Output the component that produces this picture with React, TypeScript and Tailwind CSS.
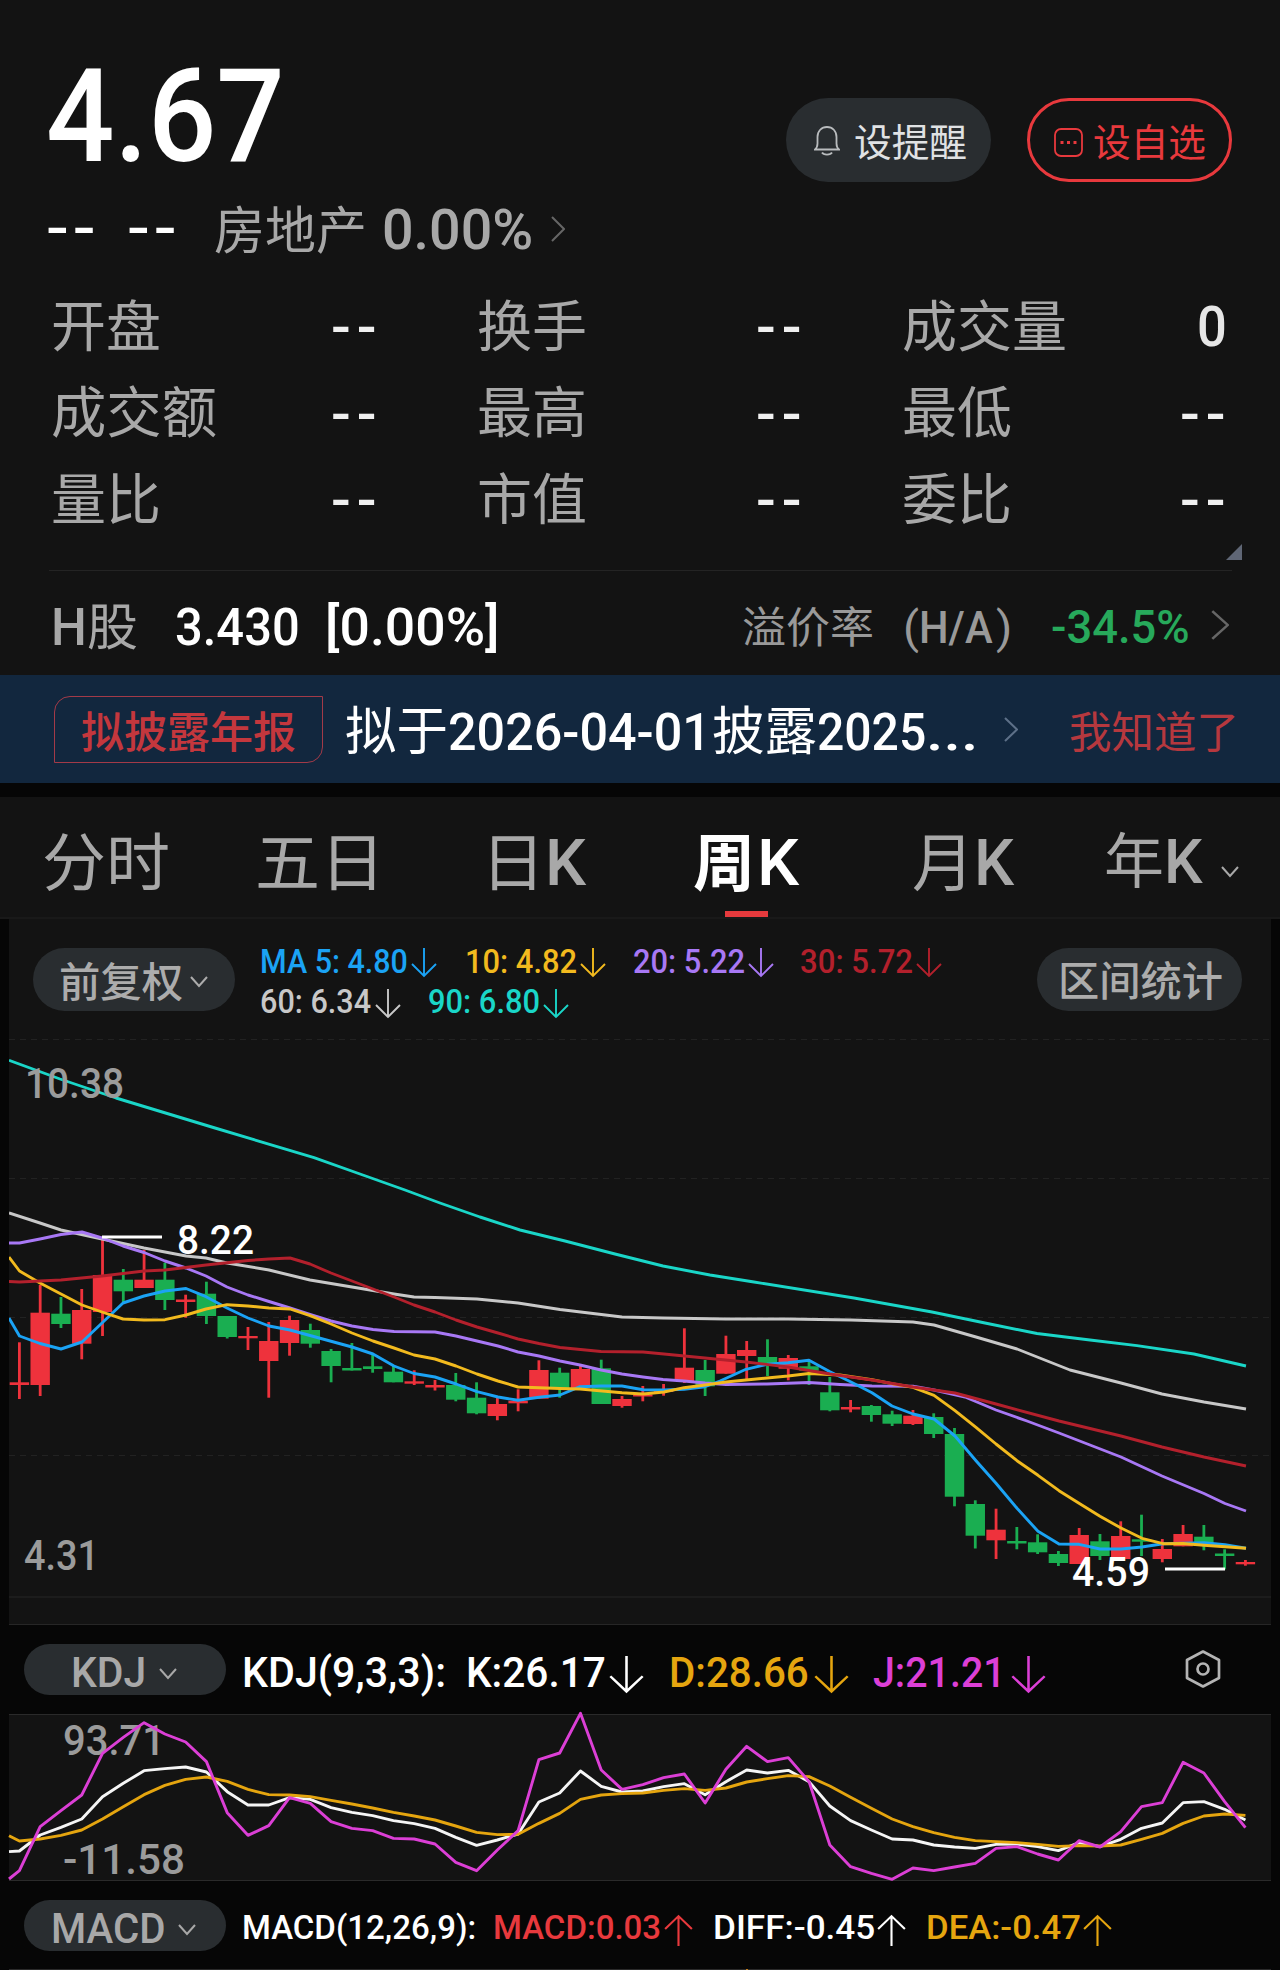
import React, { useLayoutEffect, useRef } from 'react';

// Stretches a run of text so that it fills the width given by its class
const Fit: React.FC<{ className: string; children: string }> = ({ className, children }) => {
  const ref = useRef<HTMLSpanElement>(null);

  useLayoutEffect(() => {
    const el = ref.current;
    if (!el || !el.parentElement) return;
    el.style.transform = `scaleX(${el.parentElement.clientWidth / el.offsetWidth})`;
  }, [children]);

  return (
    <span className={`inline-block shrink-0 whitespace-pre leading-none ${className}`}>
      <span ref={ref} className="inline-block origin-left">{children}</span>
    </span>
  );
};

const ChevronRight: React.FC<{ className: string }> = ({ className }) => (
  <svg className={className} viewBox="0 0 14 26" fill="none" stroke="currentColor" strokeWidth="2" preserveAspectRatio="none">
    <path d="M1 1l12 12L1 25" />
  </svg>
);

const ChevronDown: React.FC<{ className: string }> = ({ className }) => (
  <svg className={className} viewBox="0 0 18 12" fill="none" stroke="currentColor" strokeWidth="2">
    <path d="M1 1l8 9 8-9" />
  </svg>
);

const Arrow: React.FC<{ up?: boolean; className: string }> = ({ up, className }) => (
  <svg className={`shrink-0 ${className}`} viewBox="0 0 26 30" fill="none" stroke="currentColor" strokeWidth="1.9" preserveAspectRatio="none">
    {up ? <path d="M13 30V2M1 14L13 2l12 12" /> : <path d="M13 0v28M1 16l12 12 12-12" />}
  </svg>
);

interface Stat {
  label: string;
  width: string;
  value: string;
}

const stats: Stat[] = [
  { label: '开盘', width: 'w-[110px]', value: '--' },
  { label: '换手', width: 'w-[110px]', value: '--' },
  { label: '成交量', width: 'w-[165px]', value: '0' },
  { label: '成交额', width: 'w-[166px]', value: '--' },
  { label: '最高', width: 'w-[110px]', value: '--' },
  { label: '最低', width: 'w-[110px]', value: '--' },
  { label: '量比', width: 'w-[110px]', value: '--' },
  { label: '市值', width: 'w-[110px]', value: '--' },
  { label: '委比', width: 'w-[110px]', value: '--' },
];

// [rising, high, body top, body bottom, low]
const candles: [number, number, number, number, number][] = [
  [1, 1342.3, 1382.3, 1385, 1399], [1, 1285, 1312.7, 1385, 1396], [0, 1297, 1313.7, 1324, 1328],
  [1, 1289, 1310, 1343.7, 1359.3], [1, 1237, 1275, 1312, 1336], [0, 1269, 1279.7, 1291.3, 1302],
  [1, 1250, 1279.7, 1288, 1288], [0, 1262.7, 1279.7, 1300, 1310], [1, 1294.7, 1299.5, 1302, 1317.7],
  [0, 1281.7, 1293.7, 1316, 1324], [0, 1316, 1316, 1337, 1338.5], [1, 1327, 1336, 1338.3, 1350],
  [1, 1322, 1341, 1361, 1397.7], [1, 1315.7, 1320, 1343, 1355.7], [0, 1323.7, 1330, 1343.7, 1347.7],
  [0, 1349, 1351, 1366, 1382.3], [0, 1343, 1368, 1370.5, 1370.5], [0, 1354, 1366.3, 1369, 1372.7],
  [0, 1366, 1371.7, 1382.3, 1382.3], [1, 1370.3, 1381.3, 1383.7, 1385], [1, 1380, 1385, 1387.5, 1390.5],
  [0, 1373, 1385, 1399.7, 1401.3], [0, 1382.3, 1397.7, 1413.3, 1414.3], [1, 1398, 1404, 1416, 1420.3],
  [1, 1389.3, 1400.7, 1403.3, 1411.3], [1, 1360.3, 1370, 1398.7, 1398.7], [0, 1367.7, 1372.7, 1388, 1397.7],
  [1, 1366, 1369, 1388.3, 1388.3], [0, 1359.7, 1368.3, 1404, 1404], [1, 1396, 1399, 1406, 1407.7],
  [1, 1386, 1394.5, 1396.5, 1401.3], [1, 1384, 1390, 1392, 1395.7], [1, 1328.3, 1367.7, 1381, 1383],
  [0, 1360, 1370, 1386.3, 1396], [1, 1335.7, 1354, 1373.7, 1373.7], [1, 1341, 1350, 1356, 1380],
  [0, 1339.3, 1357, 1364.7, 1376], [1, 1355, 1358, 1368.7, 1380.3], [0, 1360, 1366.3, 1370.7, 1385],
  [0, 1377, 1392.3, 1410.3, 1411.3], [1, 1400, 1407, 1409.5, 1412.3], [0, 1405, 1406, 1415, 1421.7],
  [0, 1410.7, 1414.3, 1423.7, 1426], [1, 1410, 1415.7, 1424, 1425], [0, 1413.3, 1417, 1434, 1438],
  [0, 1428, 1434, 1496.7, 1506.3], [0, 1500.3, 1504, 1535.7, 1548.5], [1, 1508.7, 1529.7, 1540.3, 1559],
  [0, 1527, 1541, 1543.5, 1549.3], [0, 1534.3, 1542.3, 1552.3, 1554], [0, 1551, 1554, 1563, 1566],
  [1, 1528, 1535, 1564, 1564], [0, 1534, 1541.3, 1556, 1560], [1, 1521.3, 1536, 1559, 1559],
  [0, 1514.7, 1539.3, 1541.7, 1556], [1, 1539, 1549, 1559, 1562.3], [1, 1525, 1534, 1546.3, 1546.3],
  [0, 1525, 1536.7, 1543.3, 1550.3], [0, 1549.3, 1553.5, 1556, 1569.3], [1, 1560, 1562, 1564.3, 1565.7],
];

const averages = [
  { color: '#1ad6c8', points: '9,1060.3 60,1079 116,1098 215,1128 314,1157.7 360,1174 405,1190 440,1203 480,1217 520,1230 565,1241 615,1254 663,1266 710,1275 754,1282 854,1298 932,1312 985,1323 1037,1333.5 1090,1340 1137,1345.6 1194,1354 1246,1366' },
  { color: '#c8c8c8', points: '9,1213 40,1223 61,1230 102,1239 144,1248 186,1256 206,1258 227,1263 269,1270 310,1280 352,1287 394,1294 414,1297 435,1297.5 477,1299 518,1303 560,1309.5 622,1317 663,1318 726,1319 788,1319 851,1320 913,1322 934,1325 976,1337 1017,1349 1070,1370 1121,1383 1162,1394 1204,1402 1246,1409' },
  { color: '#a878f5', points: '9,1243 19.5,1243 40,1239 61,1234.5 82,1232 102,1238 123,1246 144,1252.5 165,1261 186,1268 206,1276 227,1287 248,1295 269,1301.5 290,1308 310,1314.5 331,1321 352,1326 373,1329.5 394,1331.5 435,1332 456,1336 477,1341 498,1346 518,1352 539,1356 560,1361 580,1365 601,1370 622,1374 643,1377 663,1379.5 684,1381 705,1383 726,1384.5 767,1384 809,1382.5 840,1384.5 872,1386 913,1386.3 934,1390 965,1397 996,1410 1027,1421 1059,1433 1090,1445 1121,1457 1162,1476 1204,1493.5 1225,1503.5 1246,1511' },
  { color: '#1ba3f5', points: '9,1318 19.5,1336 40,1343.5 61,1349 82,1342 102,1323 123,1303 144,1296 165,1291 186,1288.5 206,1296.7 227,1308 248,1318 269,1326 290,1330 310,1335.5 352,1347 373,1354 394,1366 414,1373.5 435,1377 456,1384 477,1391.7 498,1397 518,1400.3 539,1397.3 560,1395 580,1386.7 601,1386 622,1386 643,1389.7 664,1390 684,1389.3 705,1386.7 720,1381 746,1369.3 767,1364.3 788,1362.7 809,1360.3 830,1371.7 851,1382 872,1392.7 892,1406 913,1414 934,1419 955,1436 976,1460.7 996,1483.3 1017,1508.3 1038,1531.3 1059,1544 1079,1544.3 1100,1549 1121,1549 1142,1547 1163,1543.7 1204,1542.7 1225,1544.7 1246,1548.3' },
  { color: '#f2ba1e', points: '9,1257 19.5,1271 40,1283 61,1294 82,1305 102,1312 123,1319 144,1320 165,1319.7 186,1315 206,1309 227,1304.7 248,1306 269,1308 290,1309 310,1315.7 331,1324 352,1333 373,1341 394,1348 414,1355 435,1359 456,1366 477,1374 498,1381 518,1387 560,1388.5 580,1389 622,1392.7 643,1394 664,1392 684,1387.7 705,1385 726,1382 746,1380 767,1378 788,1376 809,1373.5 840,1375 872,1379.7 892,1383.7 913,1387.3 934,1395.3 955,1410.7 976,1427.3 996,1444 1017,1460.7 1038,1475.3 1059,1490.7 1079,1503.3 1100,1516.3 1121,1528 1142,1538.3 1163,1543.7 1183,1543.5 1204,1545.3 1225,1546.7 1246,1548.3' },
  { color: '#b3202c', points: '9,1281.5 19.5,1282 40,1281 61,1280 102,1276 144,1271 165,1270 206,1265 248,1260.5 269,1259 290,1258 310,1264 331,1273 352,1281 373,1289 394,1297 414,1305 435,1312 456,1320 477,1327 498,1333 518,1339 539,1343.5 560,1347.5 601,1351.5 643,1352 664,1354 705,1358 746,1362 788,1367 830,1374 872,1380 913,1387 955,1393 996,1404 1059,1421 1121,1436 1162,1447 1204,1457 1246,1466' },
];

const kdj = [
  { color: '#f5f5f5', start: 695, values: [693, 645, 622, 597, 530, 490, 452, 446, 441, 456, 515, 555, 555, 533, 538, 563, 577, 587, 602, 611, 625, 652, 676, 660, 642, 546, 519, 453, 499, 516, 513, 500, 491, 524, 485, 450, 459, 451, 485, 558, 602, 630, 657, 660, 675, 681, 685, 673, 672, 680, 692, 668, 680, 658, 625, 609, 548, 545, 568, 600] },
  { color: '#e5a50f', start: 647, values: [663, 657, 646, 630, 597, 560, 524, 496, 478, 471, 484, 508, 524, 525, 530, 541, 552, 564, 577, 588, 600, 618, 637, 644, 643, 610, 580, 538, 525, 521, 519, 511, 506, 511, 504, 486, 476, 467, 470, 498, 532, 565, 597, 620, 638, 652, 662, 665, 668, 673, 679, 677, 678, 675, 658, 640, 610, 588, 582, 586] },
  { color: '#dc3fd6', start: 777, values: [752, 620, 572, 525, 400, 352, 308, 342, 366, 425, 578, 646, 617, 533, 550, 605, 625, 632, 655, 657, 672, 727, 752, 690, 632, 419, 399, 280, 450, 508, 494, 473, 462, 549, 448, 379, 425, 413, 485, 675, 740, 760, 778, 744, 752, 741, 730, 685, 680, 702, 720, 662, 681, 635, 560, 548, 427, 459, 545, 623] },
];

const slotX = (i: number) => 19.4 + i * 20.78;

const kdjPoints = (start: number, values: number[]) =>
  [`9,${(start - 282) / 3}`, ...values.map((v, i) => `${slotX(i)},${(v - 282) / 3}`)].join(' ');

const PriceChart: React.FC = () => (
  <svg className="block h-[586px] w-[1262px]" viewBox="9 1039 1262 586" fontWeight="500">
    {[1039.5, 1178.5, 1317.5, 1455.5].map((y) => (
      <line key={y} x1="9" x2="1271" y1={y} y2={y} stroke="#222222" strokeDasharray="6 5" />
    ))}
    <line x1="9" x2="1271" y1="1597" y2="1597" stroke="#1c1c1c" strokeWidth="2" />
    <line x1="9" x2="1271" y1="1624.5" y2="1624.5" stroke="#262626" />
    {candles.map(([up, high, top, bottom, low], i) => (
      <g key={i} fill={up ? '#ee323c' : '#1aae51'}>
        <rect x={slotX(i) - 1.4} y={high} width="2.8" height={low - high} />
        <rect x={slotX(i) - 9.7} y={top} width="19.4" height={Math.max(bottom - top, 2)} />
      </g>
    ))}
    {averages.map(({ color, points }) => (
      <polyline key={color} points={points} fill="none" stroke={color} strokeWidth="2.9" strokeLinejoin="round" />
    ))}
    <path d="M102 1237h60M1165 1569h60" stroke="#ffffff" strokeWidth="2.8" />
    <g fontSize="41" fill="#ffffff">
      <text x="177" y="1253.5" textLength="77" lengthAdjust="spacingAndGlyphs">8.22</text>
      <text x="1072" y="1586" textLength="78" lengthAdjust="spacingAndGlyphs">4.59</text>
    </g>
    <g fontSize="42" fill="#9b9b9b">
      <text x="25" y="1098" textLength="99" lengthAdjust="spacingAndGlyphs">10.38</text>
      <text x="24" y="1570" textLength="75" lengthAdjust="spacingAndGlyphs">4.31</text>
    </g>
  </svg>
);

const KdjChart: React.FC = () => (
  <svg className="ml-[9px] block h-[167px] w-[1262px] overflow-visible bg-[#131313]" viewBox="9 0 1262 167">
    <path d="M9 .5h1262M9 166.5h1262" stroke="#2a2a2a" />
    <g fontSize="42" fill="#9b9b9b" fontWeight="500">
      <text x="63" y="41" textLength="102" lengthAdjust="spacingAndGlyphs">93.71</text>
      <text x="63" y="160" textLength="122" lengthAdjust="spacingAndGlyphs">-11.58</text>
    </g>
    {kdj.map(({ color, start, values }) => (
      <polyline key={color} points={kdjPoints(start, values)} fill="none" stroke={color} strokeWidth="2.9" strokeLinejoin="round" />
    ))}
  </svg>
);

export default function App() {
  return (
    <div className="h-[1970px] w-[1280px] overflow-hidden bg-[#060606] font-[Roboto,'Noto_Sans_CJK_SC',sans-serif] text-white">
      <header className="h-[675px] bg-[#131313] pt-[52px]">
        <div className="flex h-[129px] items-start pl-[46px] pr-12">
          <Fit className="w-[239px] text-[129px] font-medium">4.67</Fit>
          <div className="ml-auto mt-[46px] flex gap-9">
            <button className="flex h-[84px] w-[205px] items-center rounded-full bg-[#292d30] pl-7 text-[#e0e2e4]">
              <svg className="mt-[2px] h-[30px] w-[26px] text-[#b9bcbe]" viewBox="0 0 26 30" fill="none" stroke="currentColor" strokeWidth="1.8">
                <path d="M1 23.5h24c-2-1.700-2.500-3-2.500-6V11c0-6-4-10-9.500-10S3.500 5 3.500 11v6.500c0 3-.5 4.300-2.500 6zM8 26.500c1.500 2.700 8.500 2.700 10 0" />
              </svg>
              <Fit className="ml-[14px] mt-[5px] w-[113px] text-[38px]">设提醒</Fit>
            </button>
            <button className="flex h-[84px] w-[205px] items-center rounded-full border-3 border-[#e8393d] pl-6 text-[#e8393d]">
              <svg className="mt-[4px] h-[29px] w-[29px]" viewBox="0 0 29 29" fill="none" stroke="currentColor" strokeWidth="1.8">
                <rect x="1" y="1" width="27" height="27" rx="6" />
                <path d="M6.500 14.500h3M13 14.500h3M19.500 14.500h3" strokeWidth="3" />
              </svg>
              <Fit className="ml-[10px] mt-[5px] w-[113px] text-[38px]">设自选</Fit>
            </button>
          </div>
        </div>

        <div className="mt-[21px] flex h-14 items-baseline pl-[46px] text-[56px] text-[#a8a8a8]">
          <Fit className="w-[54px] -translate-y-[2px] font-medium tracking-[0.06em] text-white">--</Fit>
          <Fit className="ml-[27px] w-[54px] -translate-y-[2px] font-medium tracking-[0.06em] text-white">--</Fit>
          <Fit className="ml-[33px] w-[153px] text-[51px]">房地产</Fit>
          <Fit className="ml-[15px] w-[151px] font-medium">0.00%</Fit>
          <ChevronRight className="ml-[18px] h-[26px] w-[14px] -translate-y-[7px] text-[#666666]" />
        </div>

        <div className="mt-[26px] grid auto-rows-[86.5px] grid-cols-[324px_323px_322px] gap-x-[102px] pl-[51px]">
          {stats.map(({ label, width, value }) => (
            <div key={label} className="flex items-center justify-between">
              <Fit className={`text-[55px] text-[#a8a8a8] ${width}`}>{label}</Fit>
              {value === '--' ? (
                <Fit className="-mr-[7px] w-[51px] text-[56px] font-medium tracking-[0.1em] text-[#f0f0f0]">--</Fit>
              ) : (
                <Fit className="-mr-[3px] w-[30px] text-[56px] font-medium text-[#e6e6e6]">{value}</Fit>
              )}
            </div>
          ))}
        </div>

        <svg className="ml-[1226px] block h-4 w-4" viewBox="0 0 16 16">
          <path d="M0 16L16 0v16z" fill="#5f6675" />
        </svg>

        <div className="ml-[49px] mt-[10px] h-px w-[1183px] bg-[#242424]" />

        <div className="flex items-baseline pl-[51px] pt-[31px]">
          <Fit className="w-[36px] text-[52px] font-medium text-[#a8a8a8]">H</Fit>
          <Fit className="w-[51px] text-[50px] text-[#a8a8a8]">股</Fit>
          <Fit className="ml-[37px] w-[125px] text-[52px] font-medium">3.430</Fit>
          <Fit className="ml-[25px] w-[175px] text-[52px] font-medium">[0.00%]</Fit>
          <Fit className="ml-[242px] w-[132px] -translate-y-[2px] text-[43px] text-[#999999]">溢价率</Fit>
          <Fit className="ml-[29px] w-[16px] -translate-y-[2px] text-[44px] text-[#999999]">(</Fit>
          <Fit className="w-[74px] -translate-y-[2px] text-[44px] font-medium text-[#999999]">H/A</Fit>
          <Fit className="ml-[3px] w-[16px] -translate-y-[2px] text-[44px] text-[#999999]">)</Fit>
          <Fit className="ml-[39px] w-[139px] -translate-y-[2px] text-[46px] font-medium text-[#27a95b]">-34.5%</Fit>
          <ChevronRight className="ml-[21px] h-[30px] w-[18px] -translate-y-[5px] text-[#666666]" />
        </div>
      </header>

      <div className="flex h-[108px] items-center bg-[#12273e] pl-[54px]">
        <div className="flex h-[67px] w-[269px] items-center justify-center rounded-br-2xl rounded-tl-2xl border-[1.500px] border-[#a33a48] pt-2 text-[#c4373d]">
          <Fit className="w-[215px] text-[43px] font-medium">拟披露年报</Fit>
        </div>
        <div className="ml-[22px] flex items-baseline pt-[7px]">
          <Fit className="w-[103px] text-[52px]">拟于</Fit>
          <Fit className="w-[263px] text-[52px] font-medium">2026-04-01</Fit>
          <Fit className="ml-[1px] w-[105px] text-[52px]">披露</Fit>
          <Fit className="w-[109px] text-[52px] font-medium">2025</Fit>
          <Fit className="w-[52px] text-[52px] font-medium">...</Fit>
        </div>
        <ChevronRight className="ml-[26px] h-[25px] w-[14px] text-[#5d7088]" />
        <Fit className="ml-[51px] mt-[8px] w-[170px] text-[43px] text-[#b6383e]">我知道了</Fit>
      </div>

      <nav className="mt-[14px] h-[122px] border-b-2 border-[#191919] bg-[#131313] pl-[42px] pt-[34px] text-[#a8a8a8]">
        <div className="flex h-[63px] items-baseline text-[63px]">
          <Fit className="w-[128px]">分时</Fit>
          <Fit className="ml-[85px] w-[130px]">五日</Fit>
          <Fit className="ml-[96px] w-[64px]">日</Fit>
          <Fit className="w-[41px] text-[65px] font-medium">K</Fit>
          <Fit className="ml-[107px] w-[62px] font-bold text-white">周</Fit>
          <Fit className="ml-[2px] w-[42px] text-[65px] font-medium text-white">K</Fit>
          <Fit className="ml-[113px] w-[62px]">月</Fit>
          <Fit className="w-[40px] text-[65px] font-medium">K</Fit>
          <Fit className="ml-[90px] w-[60px] -translate-y-[2px] text-[60px]">年</Fit>
          <Fit className="w-[39px] -translate-y-[2px] text-[61px] font-medium">K</Fit>
          <ChevronDown className="ml-[18px] h-3 w-[18px] -translate-y-[7px]" />
        </div>
        <div className="ml-[683px] mt-[17px] h-[6px] w-[43px] bg-[#e63a3d]" />
      </nav>

      <section className="ml-[9px] h-[706px] w-[1262px] bg-[#131313]">
        <div className="flex h-[120px] items-start pt-[29px]">
          <button className="ml-6 flex h-[63px] w-[202px] items-center rounded-full bg-[#292d30] pl-[25px] text-[#acacac]">
            <Fit className="mt-[7px] w-[124px] text-[41px] font-medium">前复权</Fit>
            <ChevronDown className="ml-[8px] mt-1 h-3 w-[18px]" />
          </button>
          <div className="ml-[25px] w-[700px] text-[32.500px] font-medium">
            <div className="flex h-[41px] items-start">
              <Fit className="-mt-[2px] w-[148px] text-[#1ba3f5]">MA 5: 4.80</Fit>
              <Arrow className="ml-[3px] h-[30px] w-[26px] text-[#1ba3f5]" />
              <Fit className="-mt-[2px] ml-[28px] w-[112px] text-[#f2ba1e]">10: 4.82</Fit>
              <Arrow className="ml-[3px] h-[30px] w-[26px] text-[#f2ba1e]" />
              <Fit className="-mt-[2px] ml-[27px] w-[112px] text-[#a878f5]">20: 5.22</Fit>
              <Arrow className="ml-[3px] h-[30px] w-[26px] text-[#a878f5]" />
              <Fit className="-mt-[2px] ml-[26px] w-[113px] text-[#b3202c]">30: 5.72</Fit>
              <Arrow className="ml-[3px] h-[30px] w-[26px] text-[#b3202c]" />
            </div>
            <div className="flex items-start">
              <Fit className="-mt-[3px] w-[111px] text-[#c8c8c8]">60: 6.34</Fit>
              <Arrow className="ml-[4px] h-[30px] w-[26px] text-[#c8c8c8]" />
              <Fit className="-mt-[3px] ml-[27px] w-[112px] text-[#1ad6c8]">90: 6.80</Fit>
              <Arrow className="ml-[3px] h-[30px] w-[26px] text-[#1ad6c8]" />
            </div>
          </div>
          <button className="ml-auto mr-[29px] flex h-[63px] w-[205px] items-center rounded-full bg-[#292d30] pl-[20px] text-[#acacac]">
            <Fit className="mt-[6px] w-[165px] text-[41px] font-medium">区间统计</Fit>
          </button>
        </div>
        <PriceChart />
      </section>

      <div className="flex h-[89px] items-start pl-6 pt-[19px] text-[42px] font-medium">
        <button className="flex h-[51px] w-[202px] items-center rounded-full bg-[#292d30] pl-[47px] text-[#a8a8a8]">
          <Fit className="mt-[7px] w-[75px] text-[42px]">KDJ</Fit>
          <ChevronDown className="ml-[13px] mt-2 h-3 w-[18px]" />
        </button>
        <Fit className="ml-[16px] mt-[8px] w-[204px]">KDJ(9,3,3):</Fit>
        <Fit className="ml-[20px] mt-[8px] w-[140px]">K:26.17</Fit>
        <Arrow className="ml-[3px] mt-3 h-[38px] w-[35px]" />
        <Fit className="ml-[25px] mt-[8px] w-[140px] text-[#e5a50f]">D:28.66</Fit>
        <Arrow className="ml-[5px] mt-3 h-[38px] w-[35px] text-[#e5a50f]" />
        <Fit className="ml-[24px] mt-[8px] w-[133px] text-[#dc3fd6]">J:21.21</Fit>
        <Arrow className="ml-[5px] mt-3 h-[38px] w-[35px] text-[#dc3fd6]" />
        <svg className="ml-[139px] mt-[6px] h-[38px] w-9" viewBox="0 0 36 38" fill="none" stroke="#b4b4b4" strokeWidth="2.700">
          <path d="M18 1.500L34 10v18l-16 8.500L2 28V10z" strokeLinejoin="round" />
          <circle cx="18" cy="19" r="5.500" />
        </svg>
      </div>

      <KdjChart />

      <div className="flex h-[88px] items-start pl-6 pt-[19px] text-[34px] font-medium">
        <button className="flex h-[51px] w-[202px] items-center rounded-full bg-[#292d30] pl-[27px] text-[#a8a8a8]">
          <Fit className="mt-[6px] w-[115px] text-[42px]">MACD</Fit>
          <ChevronDown className="ml-[12px] mt-2 h-3 w-[18px]" />
        </button>
        <Fit className="ml-[16px] mt-[10px] w-[234px]">MACD(12,26,9):</Fit>
        <Fit className="ml-[17px] mt-[10px] w-[168px] text-[#e8393d]">MACD:0.03</Fit>
        <Arrow up className="ml-[3px] mt-[14px] h-[32px] w-[29px] text-[#e8393d]" />
        <Fit className="ml-[20px] mt-[10px] w-[162px]">DIFF:-0.45</Fit>
        <Arrow up className="ml-[2px] mt-[14px] h-[32px] w-[29px]" />
        <Fit className="ml-[20px] mt-[10px] w-[155px] text-[#e5a50f]">DEA:-0.47</Fit>
        <Arrow up className="ml-[2px] mt-[14px] h-[32px] w-[29px] text-[#e5a50f]" />
      </div>
      <div className="ml-[9px] h-px w-[1262px] bg-[#2a2a2a]">
        <div className="ml-[737px] h-px w-[2px] bg-[#c4801f]" />
      </div>
    </div>
  );
}
